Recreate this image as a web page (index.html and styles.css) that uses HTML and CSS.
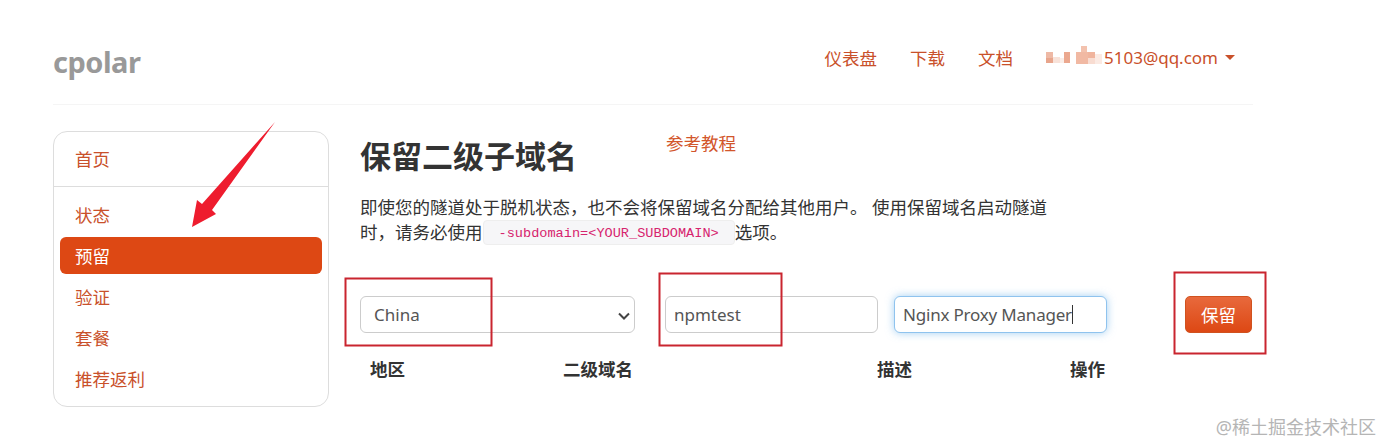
FILE: index.html
```html
<!DOCTYPE html>
<html lang="zh-CN">
  <head>
    <meta charset="utf-8" />
    <meta name="viewport" content="width=device-width,initial-scale=1.0" />
    <title>cpolar</title>
    <link rel="stylesheet" href="styles.css">
  </head>
  <body>
    <div class="container">
      <header class="topbar">
        <a class="brand">cpolar</a>
        <nav class="topnav">
          <a>仪表盘</a>
          <a>下载</a>
          <a>文档</a>
          <a class="account">
            <svg class="mosaic" width="60" height="20" viewBox="0 0 60 20">
              <rect x="0" y="6" width="7" height="6" fill="#eeb9a5" />
              <rect x="0" y="12" width="7" height="5" fill="#e8a58c" />
              <rect x="7" y="11" width="7" height="6" fill="#f8e2d9" />
              <rect x="14" y="12" width="7" height="5" fill="#fbeee8" />
              <rect x="18" y="6" width="6" height="11" fill="#eba88f" />
              <rect x="30" y="6" width="12" height="12" fill="#f1b9a3" />
              <rect x="35" y="0" width="6" height="6" fill="#f3c2ae" />
              <rect x="42" y="6" width="7" height="6" fill="#f0b49d" />
              <rect x="42" y="12" width="7" height="6" fill="#f8dcd1" />
              <rect x="49" y="8" width="7" height="10" fill="#fbeae3" />
            </svg>
            <span>5103@qq.com</span>
            <i class="caret"></i>
          </a>
        </nav>
      </header>

      <div class="layout">
        <aside class="sidebar">
          <a class="side-item">首页</a>
          <hr class="side-line" />
          <a class="side-item">状态</a>
          <a class="side-item active">预留</a>
          <a class="side-item">验证</a>
          <a class="side-item">套餐</a>
          <a class="side-item">推荐返利</a>
        </aside>

        <main class="content">
          <div class="title-row">
            <h1>保留二级子域名</h1>
            <a class="guide">参考教程</a>
          </div>
          <div class="intro">
            <p>即使您的隧道处于脱机状态，也不会将保留域名分配给其他用户。 使用保留域名启动隧道</p>
            <p>时，请务必使用<code>-subdomain=&lt;YOUR_SUBDOMAIN&gt;</code>选项。</p>
          </div>
          <form class="reserve-form" action="">
            <select class="field region">
              <option>China</option>
            </select>
            <input class="field name" value="npmtest" />
            <div class="field desc focused">Nginx Proxy Manager<i class="cursor"></i></div>
            <button class="save" type="button">保留</button>
          </form>
          <div class="labels">
            <b class="col-region">地区</b>
            <b class="col-name">二级域名</b>
            <b class="col-desc">描述</b>
            <b>操作</b>
          </div>
        </main>
      </div>
    </div>

    <!-- annotations drawn on top of the screenshot -->
    <svg class="marks" width="1381" height="443" viewBox="0 0 1381 443">
      <polygon points="275,122 212,210 216,214 192,227 197,200 202,204" fill="#ee1c2e" />
      <rect x="345.500" y="278.500" width="146" height="67" />
      <rect x="659.500" y="273.500" width="122" height="72" />
      <rect x="1174.500" y="272.500" width="91" height="81" />
    </svg>
    <div class="watermark">@稀土掘金技术社区</div>
  </body>
</html>
```

FILE: styles.css
```css
* {
  box-sizing: border-box;
}

html,
body {
  height: 443px;
  overflow: hidden;
}

body {
  margin: 0;
  position: relative;
  background: #fff;
  color: #333;
  font-family: "Noto Sans", "Noto Sans CJK SC", sans-serif;
  font-size: 17.500px;
}

a {
  color: #c9502a;
  text-decoration: none;
}

.container {
  width: 1200px;
  margin-left: 53px;
}

.topbar {
  height: 105px;
  padding-top: 10px;
  display: flex;
  align-items: center;
  justify-content: space-between;
  border-bottom: 1px solid #f5f5f5;
}

.brand {
  margin-top: 9px;
  color: #999;
  font-size: 29px;
  font-weight: 700;
  letter-spacing: -0.5px;
}

.topnav {
  display: flex;
  align-items: center;
  gap: 33px;
  padding-right: 18px;
}

.account {
  display: flex;
  align-items: center;
  font-size: 17px;
}

.account span {
  margin-left: -2px;
}

.mosaic {
  margin-top: -3px;
}

.caret {
  width: 0;
  height: 0;
  margin-left: 7px;
  border-top: 5px solid #c9502a;
  border-left: 5px solid transparent;
  border-right: 5px solid transparent;
}

.layout {
  display: flex;
  margin-top: 26px;
}

.sidebar {
  width: 276px;
  height: 276px;
  flex-shrink: 0;
  padding: 6px;
  border: 1px solid #ddd;
  border-radius: 14px;
}

.side-item {
  display: flex;
  align-items: center;
  height: 37px;
  margin-bottom: 4px;
  padding: 0 0 1px 15px;
  border-radius: 6px;
}

.side-line {
  margin: 9px -6px;
  border: 0;
  border-top: 1px solid #ddd;
}

.side-item:first-child {
  margin-top: 2px;
}

.side-item.active {
  background: #dd4814;
  color: #fff;
}

.content {
  margin-left: 31px;
}

.title-row {
  display: flex;
  align-items: flex-start;
}

h1 {
  width: 306px;
  margin: 0;
  font-size: 31px;
  line-height: 50px;
  font-weight: 700;
}

.guide {
  margin-top: -1px;
  line-height: 26px;
  color: #d2562b;
}

.intro {
  margin-top: 14px;
  line-height: 25px;
}

.intro p {
  margin: 0;
  white-space: nowrap;
}

code {
  display: inline-block;
  height: 25px;
  padding: 0 15px;
  background: #f6f6f8;
  border: 1px solid #eee;
  border-radius: 4px;
  color: #d6246e;
  font-family: "Liberation Mono", monospace;
  font-size: 13.600px;
  line-height: 25px;
  vertical-align: top;
}

.reserve-form {
  display: flex;
  align-items: center;
  margin-top: 51px;
}

.field {
  height: 37px;
  padding: 0 8px;
  background: #fff;
  border: 1px solid #ccc;
  border-radius: 6px;
  color: #555;
  font: inherit;
  font-size: 17px;
  outline: none;
}

.region {
  width: 275px;
  padding-left: 13px;
  appearance: none;
  background: #fff url("data:image/svg+xml,%3Csvg xmlns='http://www.w3.org/2000/svg' width='12' height='8'%3E%3Cpath d='M1 1.500l5 5 5-5' fill='none' stroke='%23444' stroke-width='2'/%3E%3C/svg%3E") no-repeat 257px 15px;
}

.name {
  width: 213px;
  margin-left: 30px;
}

.desc {
  width: 213px;
  margin-left: 16px;
  display: flex;
  align-items: center;
  white-space: nowrap;
  letter-spacing: -0.2px;
}

.focused {
  border-color: #8fc3ee;
  box-shadow: 0 0 8px rgba(102, 175, 233, 0.6);
}

.cursor {
  width: 1px;
  height: 19px;
  background: #333;
}

.save {
  width: 67px;
  height: 37px;
  margin-left: 78px;
  border: 1px solid #d0521f;
  border-radius: 5px;
  background: linear-gradient(#e8693c, #dd4814);
  color: #fff;
  font: inherit;
}

.labels {
  display: flex;
  margin-top: 24px;
  padding-left: 10px;
  line-height: 24px;
}

.labels b {
  font-weight: 700;
}

.col-region,
.col-desc {
  width: 193px;
}

.col-name {
  width: 314px;
}

.marks {
  position: absolute;
  top: 0;
  left: 0;
}

.marks rect {
  fill: none;
  stroke: #c9252f;
  stroke-width: 2;
}

.watermark {
  position: absolute;
  right: 5px;
  bottom: 4px;
  color: #b5b5b5;
  font-size: 18px;
  line-height: 24px;
}
```
